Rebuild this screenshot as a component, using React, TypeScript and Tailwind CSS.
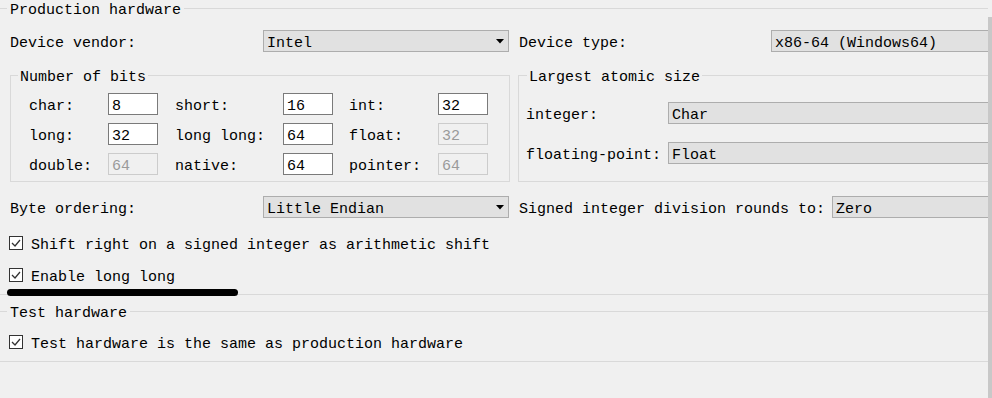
import React from 'react'

const mono = "font-['Liberation_Mono',monospace]"

// text nudged down a little so glyphs sit like the reference font
const txt = 'leading-[17px] pt-[4px] whitespace-nowrap'

function Line() {
  return <div className="h-px bg-[#d9d9d9]" />
}

function GroupTitle({ title, className = '' }: { title: string; className?: string }) {
  return (
    <div className={`flex items-center h-[17px] ${className}`}>
      <div className="w-[7px] h-px bg-[#d9d9d9]" />
      <span className={`px-[3px] ${txt}`}>{title}</span>
      <div className="flex-1 h-px bg-[#d9d9d9]" />
    </div>
  )
}

function Arrow() {
  return (
    <svg width="8" height="5" viewBox="0 0 8 5" className="mr-[4px]">
      <polygon points="0,0 8,0 4,4.5" fill="#000" />
    </svg>
  )
}

function Select({ value, className = '', arrow = false, open = false }: { value: string; className?: string; arrow?: boolean; open?: boolean }) {
  return (
    <div
      className={`h-[22px] flex items-center justify-between bg-[#e1e1e1] border border-[#adadad] pl-[3px] ${open ? 'border-r-0' : ''} ${className}`}
    >
      <span className={txt}>{value}</span>
      {arrow && <Arrow />}
    </div>
  )
}

function NumInput({ value, disabled = false }: { value: string; disabled?: boolean }) {
  return (
    <div
      className={`w-[50px] h-[22px] flex items-center pl-[3px] border ${
        disabled ? 'border-[#cccccc] bg-[#f0f0f0] text-[#9a9a9a]' : 'border-[#7a7a7a] bg-white text-black'
      }`}
    >
      <span className={txt}>{value}</span>
    </div>
  )
}

function Check({ label, className = '' }: { label: string; className?: string }) {
  return (
    <div className={`flex items-center h-[20px] ${className}`}>
      <div className="w-[14px] h-[14px] border border-[#333333] bg-white flex items-center justify-center ml-[-1px]">
        <svg width="12" height="12" viewBox="0 0 12 12">
          <polyline points="2,6 5,9 10,3" fill="none" stroke="#333" strokeWidth="1.3" />
        </svg>
      </div>
      <span className={`ml-[8px] ${txt}`}>{label}</span>
    </div>
  )
}

const bits: [string, string, boolean][][] = [
  [
    ['char:', '8', false],
    ['short:', '16', false],
    ['int:', '32', false],
  ],
  [
    ['long:', '32', false],
    ['long long:', '64', false],
    ['float:', '32', true],
  ],
  [
    ['double:', '64', true],
    ['native:', '64', false],
    ['pointer:', '64', true],
  ],
]

export default function App() {
  return (
    <div className={`w-[992px] h-[398px] bg-[#f0f0f0] text-black text-[15px] flex overflow-hidden relative ${mono}`}>
      <div className="flex-1 flex flex-col overflow-hidden">
        <GroupTitle title="Production hardware" />

        {/* Device row */}
        <div className="mt-[13px] pl-[10px] flex items-center h-[22px]">
          <span className={`w-[253px] ${txt}`}>Device vendor:</span>
          <Select value="Intel" arrow className="w-[246px]" />
          <span className={`ml-[10px] w-[252px] ${txt}`}>Device type:</span>
          <Select value="x86-64 (Windows64)" open className="flex-1" />
        </div>

        {/* Bits and atomic size */}
        <div className="mt-[15px] pl-[10px] flex">
          <fieldset className="w-[500px] border border-[#d9d9d9]">
            <legend className="ml-[7px] px-[2px] leading-[17px]">
              <span className="relative top-[2px]">Number of bits</span>
            </legend>
            <div className="flex flex-col gap-[8px] pt-[9px] pb-[6px] pl-[18px]">
              {bits.map((row, i) => (
                <div key={i} className="flex items-center h-[22px]">
                  <span className={`w-[79px] ${txt}`}>{row[0][0]}</span>
                  <NumInput value={row[0][1]} disabled={row[0][2]} />
                  <span className={`ml-[17px] w-[108px] ${txt}`}>{row[1][0]}</span>
                  <NumInput value={row[1][1]} disabled={row[1][2]} />
                  <span className={`ml-[16px] w-[89px] ${txt}`}>{row[2][0]}</span>
                  <NumInput value={row[2][1]} disabled={row[2][2]} />
                </div>
              ))}
            </div>
          </fieldset>
          <fieldset className="ml-[8px] flex-1 border border-r-0 border-[#d9d9d9]">
            <legend className="ml-[8px] px-[2px] leading-[17px]">
              <span className="relative top-[2px]">Largest atomic size</span>
            </legend>
            <div className="flex flex-col gap-[18px] pt-[18px] pb-[17px] pl-[7px]">
              <div className="flex items-center h-[22px]">
                <span className={`w-[142px] ${txt}`}>integer:</span>
                <Select value="Char" open className="flex-1" />
              </div>
              <div className="flex items-center h-[22px]">
                <span className={`w-[142px] ${txt}`}>floating-point:</span>
                <Select value="Float" open className="flex-1" />
              </div>
            </div>
          </fieldset>
        </div>

        {/* Byte ordering */}
        <div className="mt-[14px] pl-[10px] flex items-center h-[22px]">
          <span className={`w-[253px] ${txt}`}>Byte ordering:</span>
          <Select value="Little Endian" arrow className="w-[246px]" />
          <span className={`ml-[10px] w-[313px] ${txt}`}>Signed integer division rounds to:</span>
          <Select value="Zero" open className="flex-1" />
        </div>

        <div className="pl-[10px]">
          <Check label="Shift right on a signed integer as arithmetic shift" className="mt-[15px]" />
          <Check label="Enable long long" className="mt-[12px]" />
        </div>

        <div className="mt-[9px]">
          <Line />
        </div>

        <GroupTitle title="Test hardware" className="mt-[8px]" />

        <div className="pl-[10px]">
          <Check label="Test hardware is the same as production hardware" className="mt-[12px]" />
        </div>

        <div className="mt-[9px]">
          <Line />
        </div>
      </div>

      {/* right edge */}
      <div className="w-[4px] mt-[17px] bg-[#c8c8c8]" />

      {/* hand-drawn marker under "Enable long long" */}
      <div className="absolute left-[7px] top-[289px] w-[231px] h-[7px] rounded-full bg-black" />
    </div>
  )
}
